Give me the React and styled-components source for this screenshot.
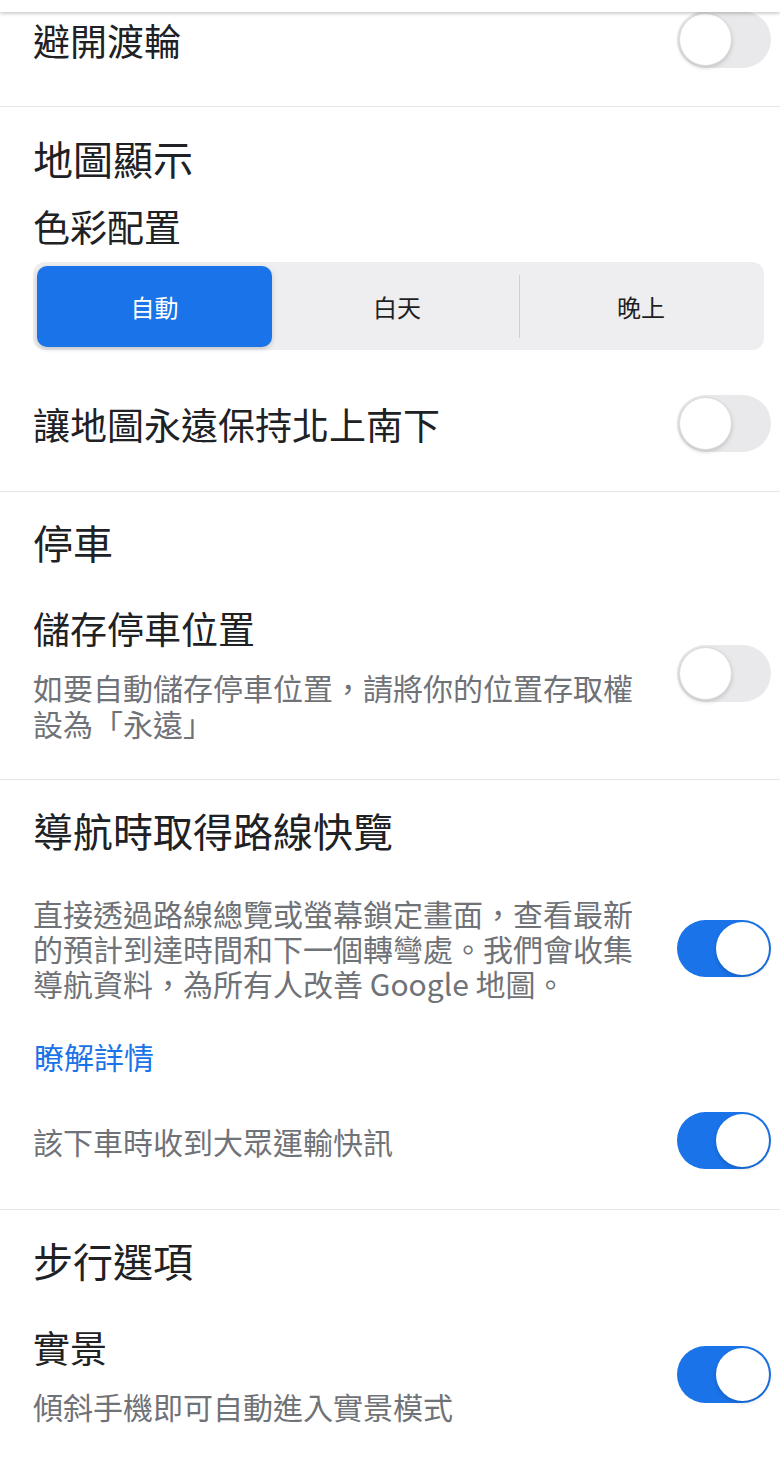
import React, { useState } from "react";
import styled, { createGlobalStyle } from "styled-components";

const GlobalStyle = createGlobalStyle`
    body {
        margin: 0;
        background: #ffffff;
        font-family: "Noto Sans CJK TC", "Noto Sans", sans-serif;
        color: #202124;
    }
`;

const Page = styled.div`
    position: relative;
    width: 780px;
    min-height: 1461px;
    background: #fff;
    overflow: hidden;
`;

/* header edge that sits over the scrolled list */
const TopBar = styled.div`
    position: absolute;
    top: 0;
    left: 0;
    right: 0;
    height: 12px;
    background: #fff;
    box-shadow: 0 1px 4px rgba(0, 0, 0, 0.28);
    z-index: 2;
`;

const Section = styled.section`
    padding: ${(p) => p.$top ?? 26}px 0 ${(p) => p.$bottom ?? 38}px;
    border-bottom: ${(p) => (p.$last ? "none" : "1px solid #e6e6e6")};
`;

const SectionTitle = styled.h2`
    margin: 0;
    padding-left: 33px;
    font-size: 40px;
    line-height: 48px;
    font-weight: 400;
    color: #202124;
`;

const Label = styled.div`
    padding-left: 33px;
    margin-top: ${(p) => p.$mt ?? 0}px;
    font-size: 37px;
    line-height: 44px;
    color: #202124;
`;

const Row = styled.div`
    display: flex;
    align-items: center;
    justify-content: space-between;
    padding: 0 9px 0 33px;
    margin-top: ${(p) => p.$mt ?? 0}px;
`;

const TextBlock = styled.div`
    display: flex;
    flex-direction: column;
    max-width: 606px;
`;

const Title = styled.div`
    font-size: 37px;
    line-height: 44px;
    color: #202124;
`;

const Sub = styled.div`
    margin-top: ${(p) => p.$mt ?? 0}px;
    font-size: 30px;
    line-height: ${(p) => p.$lh ?? 36}px;
    color: #6f7277;
`;

const Link = styled.a`
    display: block;
    margin-top: 38px;
    padding-left: 34px;
    font-size: 30px;
    line-height: 35px;
    color: #1a73e8;
    text-decoration: none;
`;

const Segmented = styled.div`
    display: grid;
    grid-template-columns: 235px 1fr 1fr;
    column-gap: 6px;
    margin: 14px 16px 0 33px;
    padding: 4px 4px 3px;
    height: 88px;
    box-sizing: border-box;
    background: #eeeef0;
    border-radius: 12px;
`;

const Segment = styled.button`
    position: relative;
    border: none;
    margin: 0;
    padding: 0;
    font-family: inherit;
    font-size: 24px;
    border-radius: 10px;
    background: ${(p) => (p.$active ? "#1a73e8" : "transparent")};
    color: ${(p) => (p.$active ? "#fff" : "#1f1f1f")};
    box-shadow: ${(p) => (p.$active ? "0 2px 5px rgba(0,0,0,0.18)" : "none")};
    cursor: pointer;
    &::before {
        content: "";
        display: ${(p) => (p.$divider ? "block" : "none")};
        position: absolute;
        left: -3px;
        top: 9px;
        bottom: 9px;
        width: 1px;
        background: #cfcfd3;
    }
`;

const Track = styled.button`
    flex: none;
    display: flex;
    align-items: center;
    justify-content: ${(p) => (p.$on ? "flex-end" : "flex-start")};
    width: 94px;
    height: 57px;
    padding: 2px;
    box-sizing: border-box;
    border: none;
    border-radius: 29px;
    background: ${(p) => (p.$on ? "#1a73e8" : "#e9e9eb")};
    cursor: pointer;
`;

const Knob = styled.span`
    width: 53px;
    height: 53px;
    box-sizing: border-box;
    border-radius: 50%;
    background: #fff;
    border: ${(p) => (p.$on ? "none" : "1px solid #dadada")};
    box-shadow: 0 2px 4px rgba(0, 0, 0, 0.16);
`;

const Toggle = ({ on }) => {
    const [value, setValue] = useState(on);
    return (
        <Track $on={value} onClick={() => setValue(!value)}>
            <Knob $on={value} />
        </Track>
    );
};

const schemes = ["自動", "白天", "晚上"];

const App = () => {
    const [scheme, setScheme] = useState(0);
    return (
        <Page>
            <GlobalStyle />
            <TopBar />

            <Section $top={11} $bottom={38}>
                <Row>
                    <Title>避開渡輪</Title>
                    <Toggle on={false} />
                </Row>
            </Section>

            <Section $top={27} $bottom={39}>
                <SectionTitle>地圖顯示</SectionTitle>
                <Label $mt={22}>色彩配置</Label>
                <Segmented>
                    {schemes.map((s, i) => (
                        <Segment
                            key={s}
                            $active={scheme === i}
                            $divider={i > 0 && scheme !== i && scheme !== i - 1}
                            onClick={() => setScheme(i)}
                        >
                            {s}
                        </Segment>
                    ))}
                </Segmented>
                <Row $mt={45}>
                    <Title>讓地圖永遠保持北上南下</Title>
                    <Toggle on={false} />
                </Row>
            </Section>

            <Section $top={26} $bottom={38}>
                <SectionTitle>停車</SectionTitle>
                <Row $mt={40}>
                    <TextBlock>
                        <Title>儲存停車位置</Title>
                        <Sub $mt={19}>如要自動儲存停車位置，請將你的位置存取權設為「永遠」</Sub>
                    </TextBlock>
                    <Toggle on={false} />
                </Row>
            </Section>

            <Section $top={26} $bottom={40}>
                <SectionTitle>導航時取得路線快覽</SectionTitle>
                <Row $mt={42}>
                    <TextBlock>
                        <Sub $lh={35}>
                            直接透過路線總覽或螢幕鎖定畫面，查看最新的預計到達時間和下一個轉彎處。我們會收集導航資料，為所有人改善 Google 地圖。
                        </Sub>
                    </TextBlock>
                    <Toggle on />
                </Row>
                <Link href="#">瞭解詳情</Link>
                <Row $mt={38}>
                    <Sub>該下車時收到大眾運輸快訊</Sub>
                    <Toggle on />
                </Row>
            </Section>

            <Section $top={26} $bottom={36} $last>
                <SectionTitle>步行選項</SectionTitle>
                <Row $mt={41}>
                    <TextBlock>
                        <Title>實景</Title>
                        <Sub $mt={19}>傾斜手機即可自動進入實景模式</Sub>
                    </TextBlock>
                    <Toggle on />
                </Row>
            </Section>
        </Page>
    );
};

export default App;
